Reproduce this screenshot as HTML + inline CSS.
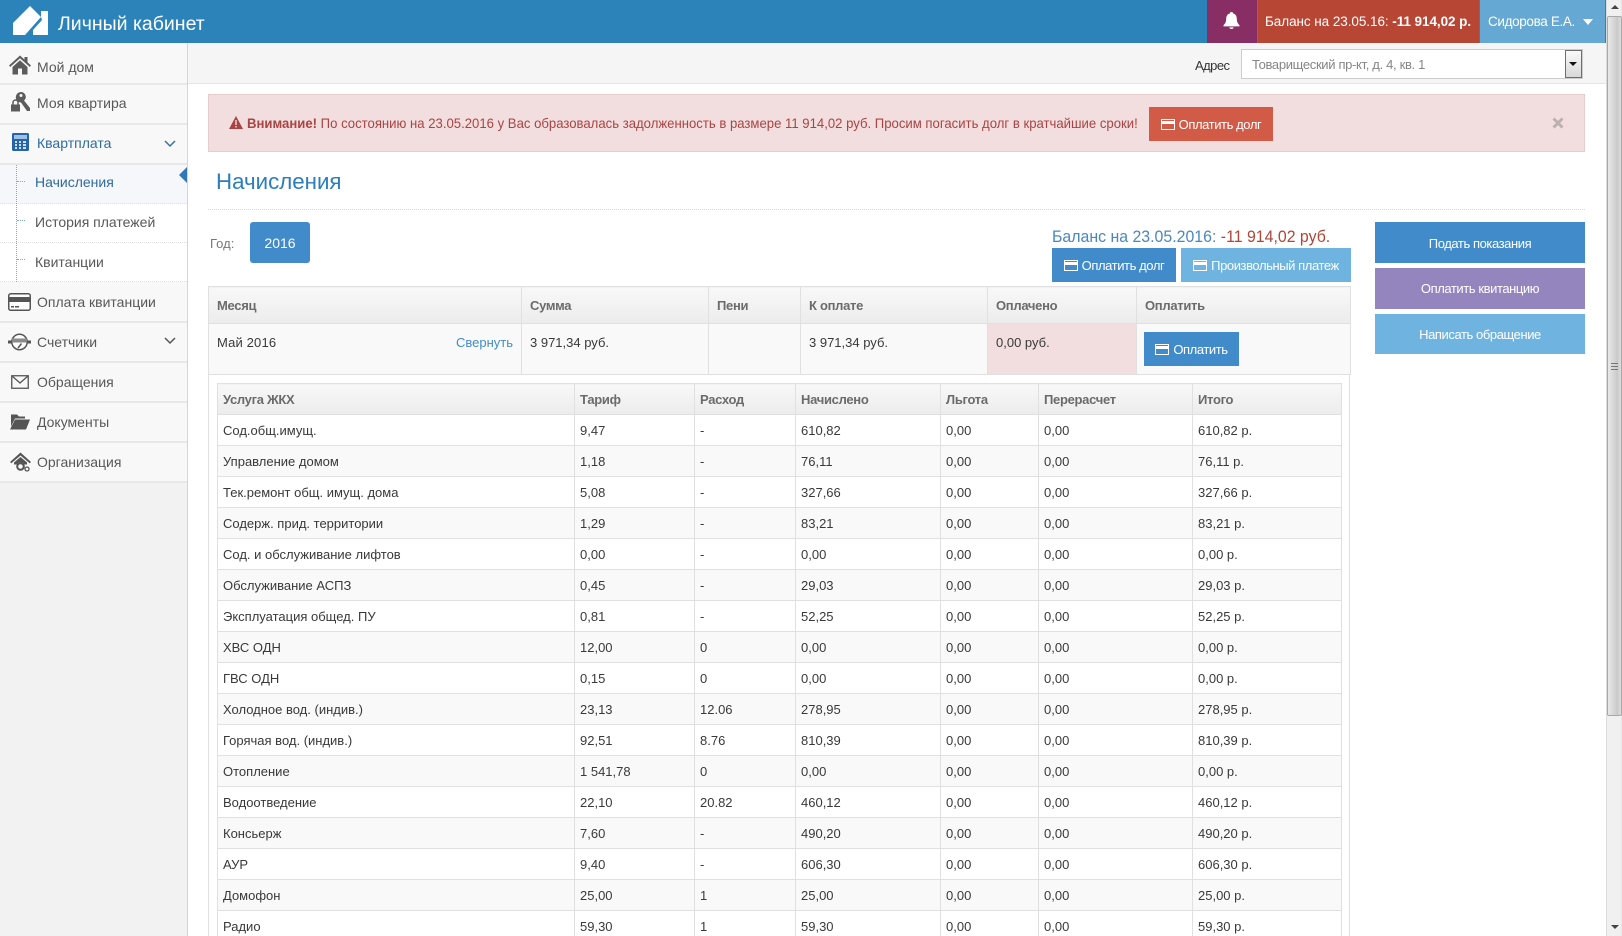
<!DOCTYPE html>
<html lang="ru"><head><meta charset="utf-8"><title>Личный кабинет</title>
<style>
*{box-sizing:border-box}
html,body{margin:0;padding:0;width:1622px;height:936px;overflow:hidden;background:#fff;font-family:"Liberation Sans",sans-serif;font-size:13px;color:#393939}
.a{position:absolute;white-space:nowrap}
#w{position:relative;width:1622px;height:936px;overflow:hidden}
.btn{position:absolute;color:#fff;display:flex;align-items:center;justify-content:center;white-space:nowrap;font-size:13px;letter-spacing:-.42px}
.btn svg{margin-right:4px}
.nav{position:absolute;left:0;width:187px;background:#f8f8f8;border-bottom:2px solid #e8e8e8;font-size:14px;color:#585858;padding-left:37px;display:flex;align-items:center;white-space:nowrap}
.sub{background:#fff;padding-left:35px;border-bottom:1px dotted #e0e0e0}
.ic{position:absolute;left:8px;top:50%;transform:translateY(-50%)}
table{border-collapse:collapse;table-layout:fixed;position:absolute}
td,th{border:1px solid #e0e0e0;padding:0 5px;text-align:left;white-space:nowrap;overflow:hidden;font-size:13px}
th{background:linear-gradient(#f8f8f8,#ececec);color:#6b6b6b;font-weight:700;letter-spacing:-.3px}
#inner tr{height:31px}
#inner tr:nth-child(odd) td{background:#f9f9f9}
#outer th{padding-left:8px;font-size:13px}
</style></head><body><div id="w">

<!-- header -->
<div class="a" style="left:0;top:0;width:1606px;height:43px;background:#2b83ba"></div>
<svg class="a" style="left:12px;top:5px" width="38" height="32" viewBox="12 5 38 32"><path fill="#fff" d="M13 23L30 6 41 17 25 35H13zM41 11h7v24H33v-5l9-10-1-3z"/></svg>
<div class="a" style="left:58px;top:13px;font-size:19.500px;color:#fff">Личный кабинет</div>
<div class="a" style="left:1207px;top:0;width:50px;height:43px;background:#892e65"></div>
<svg class="a" style="left:1223px;top:12px" width="17" height="17" viewBox="0 0 16 16"><path fill="#fff" d="M8 0c1 0 1.500.6 1.500 1.400C12 2 13 4 13 6.500c0 3 1 4.500 2.500 6v1H.5v-1C2 11 3 9.500 3 6.500 3 4 4 2 6.500 1.400 6.500.6 7 0 8 0zM6 14.500h4C10 15.500 9 16 8 16s-2-.5-2-1.500z"/></svg>
<div class="a" style="left:1258px;top:0;width:221px;height:43px;background:#b74635;color:#fff;font-size:13.500px;line-height:43px;padding-left:7px;letter-spacing:-.06px">Баланс на 23.05.16: <b>-11 914,02 р.</b></div>
<div class="a" style="left:1480px;top:0;width:125px;height:43px;background:#64a8d3;color:#fff;font-size:13.500px;line-height:43px;padding-left:8px;letter-spacing:-.35px">Сидорова Е.А.</div>
<div class="a" style="left:1583px;top:19px;border:5.500px solid transparent;border-top:6px solid #fff;border-bottom:0"></div>

<!-- scrollbar -->
<div class="a" style="left:1606px;top:0;width:16px;height:936px;background:#f0f0f0;border-left:1px solid #dcdcdc;border-right:1px solid #e8e8e8"></div>
<div class="a" style="left:1607px;top:16px;width:15px;height:700px;background:linear-gradient(90deg,#e8e8e8,#d2d2d2 55%,#c8c8c8 70%,#dedede);border:1px solid #a8a8a8;border-radius:2px"></div>
<div class="a" style="left:1611px;top:5px;border:4px solid transparent;border-bottom:4px solid #444;border-top:0"></div>
<div class="a" style="left:1611px;top:925px;border:4px solid transparent;border-top:4px solid #444;border-bottom:0"></div>
<div class="a" style="left:1611px;top:363px;width:7px;height:7px;border-top:1px solid #777;border-bottom:1px solid #777;background:linear-gradient(#777,#777) center/100% 1px no-repeat"></div>

<!-- subheader -->
<div class="a" style="left:188px;top:43px;width:1418px;height:41px;background:#f5f5f5;border-bottom:1px solid #e5e5e5"></div>
<div class="a" style="left:1195px;top:58px;font-size:13px;color:#333;letter-spacing:-.55px">Адрес</div>
<div class="a" style="left:1241px;top:49px;width:342px;height:30px;background:#fff;border:1px solid #ccc;color:#858585;font-size:13px;line-height:29px;padding-left:10px;letter-spacing:-.33px">Товарищеский пр-кт, д. 4, кв. 1</div>
<div class="a" style="left:1565px;top:50px;width:17px;height:28px;background:linear-gradient(#fafafa,#d8d8d8);border:1px solid #6e6e6e"></div>
<div class="a" style="left:1569px;top:62px;border:4px solid transparent;border-top:4px solid #111;border-bottom:0"></div>

<!-- sidebar -->
<div class="a" style="left:0;top:43px;width:187px;height:893px;background:#f2f2f2"></div>
<div class="a" style="left:187px;top:43px;width:1px;height:893px;background:#d5d5d5"></div>
<div class="nav" style="top:43px;height:42px;padding-top:8px">Мой дом<svg class="ic" style="left:9px;margin-top:2px" width="22" height="19" viewBox="0 0 22 19"><path fill="#5c5c5c" d="M11 0L0 10l1.300 1.400L11 2.800l9.700 8.600L22 10l-3.500-3.200V1.500h-3v2.600zM3.500 11.500V19h5.500v-6h4v6h5.500v-7.500L11 4.800z"/></svg></div>
<div class="nav" style="top:85px;height:40px;padding-bottom:2px">Моя квартира<svg class="ic" style="left:10px;margin-top:-2px" width="20" height="20" viewBox="0 0 20 20"><path fill="#5c5c5c" fill-rule="evenodd" d="M11 0a4.800 4.800 0 0 1 3 8.500L20 16v3h-3l-6-8.500A4.800 4.800 0 0 1 11 0zm0 2a1.500 1.500 0 1 0 0 3 1.500 1.500 0 0 0 0-3z"/><path fill="none" stroke="#5c5c5c" stroke-width="1.500" d="M3 13V10.500a2.500 2.500 0 0 1 5 0V13"/><rect x="1" y="12.500" width="9" height="7" fill="#5c5c5c"/></svg></div>
<div class="nav" style="top:125px;height:40px;color:#2f6aa0;padding-bottom:2px">Квартплата<svg class="ic" style="left:12px;margin-top:-2px" width="17" height="18" viewBox="0 0 17 18"><rect width="17" height="18" rx="1.500" fill="#2663a8"/><rect x="2" y="2" width="13" height="4" fill="#9cc0e4"/><path fill="#cfe0f2" d="M3 8h2v2H3zM7 8h2v2H7zM11 8h3v2h-3zM3 11h2v2H3zM7 11h2v2H7zM11 11h3v2h-3zM3 14h2v2H3zM7 14h2v2H7zM11 14h3v2h-3z"/></svg><svg class="a" style="left:164px;top:15px" width="12" height="8" viewBox="0 0 12 8"><path d="M1 1l5 5 5-5" fill="none" stroke="#3a6f9f" stroke-width="1.500"/></svg></div>
<div class="nav sub" style="top:165px;height:39px;background:#f5f7fb;color:#2f6aa0;padding-bottom:4px">Начисления</div>
<div class="nav sub" style="top:204px;height:39px;padding-bottom:2px">История платежей</div>
<div class="nav sub" style="top:243px;height:39px">Квитанции</div>
<div class="a" style="left:16px;top:165px;height:117px;border-left:1px dotted #7fa8cf"></div>
<div class="a" style="left:17px;top:181px;width:8px;border-top:1px dotted #7fa8cf"></div>
<div class="a" style="left:17px;top:220px;width:8px;border-top:1px dotted #7fa8cf"></div>
<div class="a" style="left:17px;top:259px;width:8px;border-top:1px dotted #7fa8cf"></div>
<div class="a" style="left:179px;top:167px;border:8.500px solid transparent;border-right:8px solid #2f79b9;border-left:0"></div>
<div class="nav" style="top:282px;height:41px">Оплата квитанции<svg class="ic" style="left:8px" width="23" height="18" viewBox="0 0 23 18"><rect x=".75" y=".75" width="21.500" height="16.500" rx="2" fill="#fff" stroke="#555" stroke-width="1.500"/><rect x="1" y="4" width="21" height="5" fill="#555"/><path fill="#555" d="M3 13h3v1.500H3zM7 13h4v1.500H7z"/></svg></div>
<div class="nav" style="top:323px;height:40px">Счетчики<svg class="ic" style="left:8px" width="23" height="18" viewBox="0 0 23 18"><circle cx="11.500" cy="9" r="7.700" fill="#fff" stroke="#555" stroke-width="1.500"/><path fill="#555" d="M0 7.500h3.500v3H0zM19.500 7.500H23v3h-3.500z"/><rect x="4" y="5.500" width="15" height="4" fill="#8a8a8a"/><path d="M10 15l3.500-4.500" stroke="#555" stroke-width="1.500"/></svg><svg class="a" style="left:164px;top:14px" width="12" height="8" viewBox="0 0 12 8"><path d="M1 1l5 5 5-5" fill="none" stroke="#555" stroke-width="1.500"/></svg></div>
<div class="nav" style="top:363px;height:40px">Обращения<svg class="ic" style="left:11px" width="18" height="14" viewBox="0 0 18 14"><rect x=".75" y=".75" width="16.500" height="12.500" fill="none" stroke="#555" stroke-width="1.300"/><path d="M1 1l8 7 8-7" fill="none" stroke="#555" stroke-width="1.300"/></svg></div>
<div class="nav" style="top:403px;height:40px">Документы<svg class="ic" style="left:10px" width="20" height="15" viewBox="0 0 20 15"><path fill="#555" d="M1 0h6l2 2h6v2H5L1 12zM5 5h15l-4 10H0z"/></svg></div>
<div class="nav" style="top:443px;height:40px">Организация<svg class="ic" style="left:10px" width="21" height="19" viewBox="0 0 21 19"><path fill="#555" d="M10.500 0L0 9.500l1.300 1.300L10.500 3l9.200 7.800L21 9.500z"/><path fill="#555" d="M4 10l6.500-5.500L17 10v2h-3a4 4 0 0 0-7 0H4z"/><circle cx="10.500" cy="14" r="3.300" fill="none" stroke="#555" stroke-width="2"/><circle cx="17" cy="16.500" r="2" fill="none" stroke="#555" stroke-width="1.300"/></svg></div>

<!-- alert -->
<div class="a" style="left:208px;top:94px;width:1377px;height:58px;background:#f2dede;border:1px solid #ebcccc"></div>
<svg class="a" style="left:229px;top:116px" width="14" height="13" viewBox="0 0 14 13"><path fill="#a94442" d="M7 0l7 13H0z"/><path fill="#f2dede" d="M6.300 4h1.400v5H6.300zM6.300 10h1.400v1.500H6.300z"/></svg>
<div class="a" style="left:247px;top:115px;font-size:14px;color:#a94442;transform:scaleX(.938);transform-origin:0 0"><b>Внимание!</b> По состоянию на 23.05.2016 у Вас образовалась задолженность в размере 11 914,02 руб. Просим погасить долг в кратчайшие сроки!</div>
<div class="btn" style="left:1149px;top:107px;width:124px;height:34px;background:#d15b47">
<svg width="14" height="11" viewBox="0 0 14 11"><rect x=".5" y=".5" width="13" height="10" fill="none" stroke="#fff"/><rect y="2" width="14" height="3" fill="#fff"/></svg>Оплатить долг</div>
<svg class="a" style="left:1552px;top:117px" width="12" height="12" viewBox="0 0 12 12"><path d="M1.500 1.500l9 9M10.500 1.500l-9 9" stroke="#bdb0b0" stroke-width="3"/></svg>

<!-- title -->
<div class="a" style="left:216px;top:169px;font-size:22.300px;color:#2b7dbc">Начисления</div>
<div class="a" style="left:208px;top:209px;width:1377px;border-top:1px dotted #d8d8d8"></div>
<div class="a" style="left:210px;top:236px;font-size:13px;color:#777">Год:</div>
<div class="btn" style="left:250px;top:222px;width:60px;height:41px;background:#428bca;border-radius:3px;font-size:14px;letter-spacing:0">2016</div>
<div class="a" style="left:1052px;top:227px;font-size:17px;color:#4a87c0;transform:scaleX(.934);transform-origin:0 0">Баланс на 23.05.2016: <span style="color:#b0453a">-11 914,02 руб.</span></div>
<div class="btn" style="left:1052px;top:248px;width:124px;height:34px;background:#428bca">
<svg width="14" height="11" viewBox="0 0 14 11"><rect x=".5" y=".5" width="13" height="10" fill="none" stroke="#fff"/><rect y="2" width="14" height="3" fill="#fff"/></svg>Оплатить долг</div>
<div class="btn" style="left:1181px;top:248px;width:170px;height:34px;background:#6fb3e0">
<svg width="14" height="11" viewBox="0 0 14 11"><rect x=".5" y=".5" width="13" height="10" fill="none" stroke="#fff"/><rect y="2" width="14" height="3" fill="#fff"/></svg>Произвольный платеж</div>
<div class="btn" style="left:1375px;top:222px;width:210px;height:41px;background:#428bca;padding-top:1px">Подать показания</div>
<div class="btn" style="left:1375px;top:268px;width:210px;height:41px;background:#9585bf">Оплатить квитанцию</div>
<div class="btn" style="left:1375px;top:314px;width:210px;height:40px;background:#6fb3e0">Написать обращение</div>

<!-- outer table -->
<div class="a" style="left:208px;top:374px;width:1142px;height:600px;border-left:1px solid #e0e0e0;border-right:1px solid #e0e0e0"></div>
<table id="outer" style="left:208px;top:286px;width:1142px">
<colgroup><col style="width:313px"><col style="width:187px"><col style="width:92px"><col style="width:187px"><col style="width:149px"><col style="width:214px"></colgroup>
<tr style="height:37px"><th>Месяц</th><th>Сумма</th><th>Пени</th><th>К оплате</th><th>Оплачено</th><th>Оплатить</th></tr>
<tr style="height:51px;vertical-align:top;background:#f9f9f9"><td style="padding:11px 8px 0;position:relative;letter-spacing:.15px">Май 2016<span style="position:absolute;right:8px;color:#428bca;letter-spacing:0">Свернуть</span></td><td style="padding:11px 8px 0">3 971,34 руб.</td><td></td><td style="padding:11px 8px 0">3 971,34 руб.</td><td style="padding:11px 8px 0;background:#f2dede">0,00 руб.</td><td></td></tr>
</table>
<div class="btn" style="left:1144px;top:332px;width:95px;height:34px;background:#428bca">
<svg width="14" height="11" viewBox="0 0 14 11"><rect x=".5" y=".5" width="13" height="10" fill="none" stroke="#fff"/><rect y="2" width="14" height="3" fill="#fff"/></svg>Оплатить</div>

<!-- inner table -->
<table id="inner" style="left:217px;top:383px;width:1124px">
<colgroup><col style="width:357px"><col style="width:120px"><col style="width:101px"><col style="width:145px"><col style="width:98px"><col style="width:154px"><col style="width:149px"></colgroup>
<tr><th>Услуга ЖКХ</th><th>Тариф</th><th>Расход</th><th>Начислено</th><th>Льгота</th><th>Перерасчет</th><th>Итого</th></tr>
<tr><td>Сод.общ.имущ.</td><td>9,47</td><td>-</td><td>610,82</td><td>0,00</td><td>0,00</td><td>610,82 р.</td></tr>
<tr><td>Управление домом</td><td>1,18</td><td>-</td><td>76,11</td><td>0,00</td><td>0,00</td><td>76,11 р.</td></tr>
<tr><td>Тек.ремонт общ. имущ. дома</td><td>5,08</td><td>-</td><td>327,66</td><td>0,00</td><td>0,00</td><td>327,66 р.</td></tr>
<tr><td>Содерж. прид. территории</td><td>1,29</td><td>-</td><td>83,21</td><td>0,00</td><td>0,00</td><td>83,21 р.</td></tr>
<tr><td>Сод. и обслуживание лифтов</td><td>0,00</td><td>-</td><td>0,00</td><td>0,00</td><td>0,00</td><td>0,00 р.</td></tr>
<tr><td>Обслуживание АСПЗ</td><td>0,45</td><td>-</td><td>29,03</td><td>0,00</td><td>0,00</td><td>29,03 р.</td></tr>
<tr><td>Эксплуатация общед. ПУ</td><td>0,81</td><td>-</td><td>52,25</td><td>0,00</td><td>0,00</td><td>52,25 р.</td></tr>
<tr><td>ХВС ОДН</td><td>12,00</td><td>0</td><td>0,00</td><td>0,00</td><td>0,00</td><td>0,00 р.</td></tr>
<tr><td>ГВС ОДН</td><td>0,15</td><td>0</td><td>0,00</td><td>0,00</td><td>0,00</td><td>0,00 р.</td></tr>
<tr><td>Холодное вод. (индив.)</td><td>23,13</td><td>12.06</td><td>278,95</td><td>0,00</td><td>0,00</td><td>278,95 р.</td></tr>
<tr><td>Горячая вод. (индив.)</td><td>92,51</td><td>8.76</td><td>810,39</td><td>0,00</td><td>0,00</td><td>810,39 р.</td></tr>
<tr><td>Отопление</td><td>1 541,78</td><td>0</td><td>0,00</td><td>0,00</td><td>0,00</td><td>0,00 р.</td></tr>
<tr><td>Водоотведение</td><td>22,10</td><td>20.82</td><td>460,12</td><td>0,00</td><td>0,00</td><td>460,12 р.</td></tr>
<tr><td>Консьерж</td><td>7,60</td><td>-</td><td>490,20</td><td>0,00</td><td>0,00</td><td>490,20 р.</td></tr>
<tr><td>АУР</td><td>9,40</td><td>-</td><td>606,30</td><td>0,00</td><td>0,00</td><td>606,30 р.</td></tr>
<tr><td>Домофон</td><td>25,00</td><td>1</td><td>25,00</td><td>0,00</td><td>0,00</td><td>25,00 р.</td></tr>
<tr><td>Радио</td><td>59,30</td><td>1</td><td>59,30</td><td>0,00</td><td>0,00</td><td>59,30 р.</td></tr>
</table>
</div></body></html>
